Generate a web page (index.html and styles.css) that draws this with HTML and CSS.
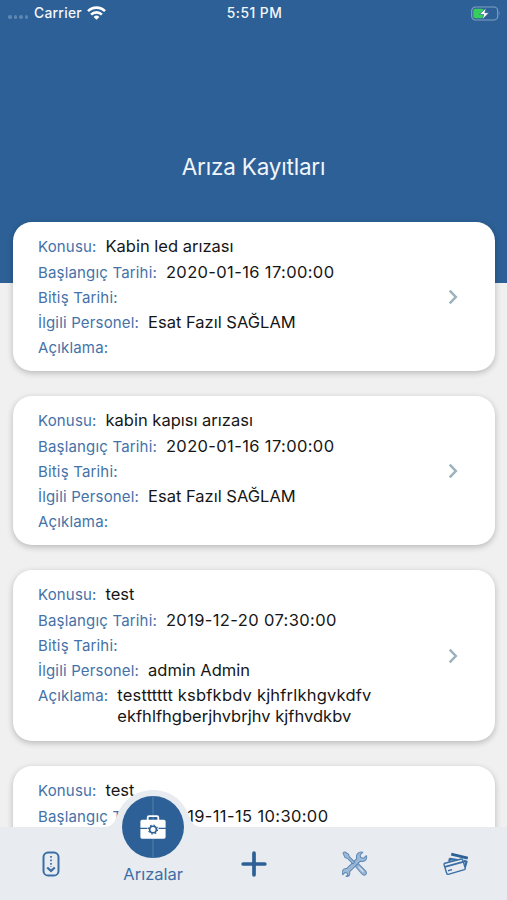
FILE: index.html
```html
<!DOCTYPE html>
<html lang="tr">
<head>
    <meta charset="UTF-8">
    <meta name="viewport" content="width=device-width, initial-scale=1.0">
    <title>Arıza Kayıtları</title>
    <link rel="stylesheet" href="styles.css">
</head>
<body>
    <div class="app">
        <!-- Durum çubuğu -->
        <div class="status-bar">
            <div class="status-left">
                <span class="signal"><i></i><i></i><i></i><i></i></span>
                <span class="carrier">Carrier</span>
                <svg class="wifi" width="19" height="14" viewBox="0 0 19 14" fill="none" stroke="#fff" stroke-width="2.6">
                    <path d="M1 5.2a12 12 0 0 1 17 0"/>
                    <path d="M4.1 8.6a7.6 7.6 0 0 1 10.8 0"/>
                    <path d="M9.5 13.8L6.6 10.9a4.1 4.1 0 0 1 5.8 0z" fill="#fff" stroke="none"/>
                </svg>
            </div>
            <span class="clock">5:51 PM</span>
            <svg class="battery" width="30" height="15" viewBox="0 0 30 15">
                <rect x="0.7" y="1" width="26" height="13" rx="3.8" fill="none" stroke="#7f9fc1" stroke-width="1.2"/>
                <path d="M28.3 5.3q1.6 2.2 0 4.4z" fill="#7f9fc1"/>
                <rect x="2.3" y="2.7" width="10.5" height="9.6" rx="2" fill="#37cf5c"/>
                <path d="M15.2 1.8L8.4 8.4h4.3l-1.3 5L18 6.7h-4.2z" fill="#fff" stroke="#2d6096" stroke-width="0.7"/>
            </svg>
        </div>

        <header class="header">
            <h1>Arıza Kayıtları</h1>
        </header>

        <!-- Arıza listesi -->
        <main class="list">
            <article class="card">
                <dl class="fields">
                    <div class="row"><dt>Konusu:</dt><dd>Kabin led arızası</dd></div>
                    <div class="row"><dt>Başlangıç Tarihi:</dt><dd class="date">2020-01-16 17:00:00</dd></div>
                    <div class="row empty"><dt>Bitiş Tarihi:</dt><dd></dd></div>
                    <div class="row person"><dt>İlgili Personel:</dt><dd>Esat Fazıl SAĞLAM</dd></div>
                    <div class="row"><dt>Açıklama:</dt><dd></dd></div>
                </dl>
                <svg class="chevron" width="10" height="16" viewBox="0 0 10 16"><path d="M1.7 1.7L7.8 8l-6.1 6.3"/></svg>
            </article>
            <article class="card">
                <dl class="fields">
                    <div class="row"><dt>Konusu:</dt><dd>kabin kapısı arızası</dd></div>
                    <div class="row"><dt>Başlangıç Tarihi:</dt><dd class="date">2020-01-16 17:00:00</dd></div>
                    <div class="row empty"><dt>Bitiş Tarihi:</dt><dd></dd></div>
                    <div class="row person"><dt>İlgili Personel:</dt><dd>Esat Fazıl SAĞLAM</dd></div>
                    <div class="row"><dt>Açıklama:</dt><dd></dd></div>
                </dl>
                <svg class="chevron" width="10" height="16" viewBox="0 0 10 16"><path d="M1.7 1.7L7.8 8l-6.1 6.3"/></svg>
            </article>
            <article class="card">
                <dl class="fields">
                    <div class="row"><dt>Konusu:</dt><dd>test</dd></div>
                    <div class="row"><dt>Başlangıç Tarihi:</dt><dd class="date">2019-12-20 07:30:00</dd></div>
                    <div class="row empty"><dt>Bitiş Tarihi:</dt><dd></dd></div>
                    <div class="row person"><dt>İlgili Personel:</dt><dd>admin Admin</dd></div>
                    <div class="row"><dt>Açıklama:</dt><dd class="note"><span class="note-first">testttttt ksbfkbdv kjhfrlkhgvkdfv</span><br>ekfhlfhgberjhvbrjhv kjfhvdkbv</dd></div>
                </dl>
                <svg class="chevron" width="10" height="16" viewBox="0 0 10 16"><path d="M1.7 1.7L7.8 8l-6.1 6.3"/></svg>
            </article>
            <article class="card">
                <dl class="fields">
                    <div class="row"><dt>Konusu:</dt><dd>test</dd></div>
                    <div class="row"><dt>Başlangıç Tarihi:</dt><dd class="date">2019-11-15 10:30:00</dd></div>
                </dl>
            </article>
        </main>

        <!-- Alt menü -->
        <nav class="tab-bar">
            <svg class="tab-bg" width="507" height="110" viewBox="0 0 507 110">
                <path d="M0 37H104C113 37 115 31 118 23C124 9 137 0 153 0S182 9 188 23C191 31 193 37 202 37H507V110H0z" fill="#e8ecf1"/>
            </svg>
            <a class="tab">
                <svg width="18" height="26" viewBox="0 0 18 26" fill="none" stroke="#3a6ea5" stroke-width="2">
                    <rect x="1.5" y="1.5" width="15" height="23" rx="4.6"/>
                    <path d="M9 5v11" stroke-width="1.7" stroke-dasharray="1.8 1.7"/>
                    <path d="M5.2 16.5L9 19.9l3.8-3.4" stroke-width="2.2"/>
                </svg>
            </a>
            <a class="tab active">
                <span class="bubble">
                    <svg width="62" height="62" viewBox="0 0 62 62">
                        <path d="M31 0v62" stroke="#5b88b6" stroke-width="0.8"/>
                        <path d="M25.7 24.5v-3.1q0-1.3 1.3-1.3h8q1.3 0 1.3 1.3v3.1" fill="none" stroke="#fff" stroke-width="1.8"/>
                        <path d="M20.2 23.8h21.6q1.8 0 1.8 1.8v6.1H18.4v-6.1q0-1.8 1.8-1.8zM18.4 33.1h25.2v8q0 1.6-1.6 1.6H20q-1.6 0-1.6-1.6z" fill="#fff"/>
                        <circle cx="31" cy="33.5" r="5.7" fill="#fff"/>
                        <circle cx="31" cy="33.5" r="3.3" fill="none" stroke="#2d6096" stroke-width="1.6"/>
                        <circle cx="31" cy="33.5" r="4.5" fill="none" stroke="#2d6096" stroke-width="1.2" stroke-dasharray="1.6 1.934"/>
                    </svg>
                </span>
                <span class="tab-label">Arızalar</span>
            </a>
            <a class="tab">
                <svg width="26" height="26" viewBox="0 0 26 26"><path d="M13 2.2v21.6M2.2 13h21.6" stroke="#2d6096" stroke-width="3.7" stroke-linecap="round"/></svg>
            </a>
            <a class="tab">
                <svg width="26" height="26" viewBox="0 0 28 28" fill="#9db9d5" stroke="#5d89b7" stroke-width="1.1" stroke-linejoin="round">
                    <path d="M8.3 22.3L19.8 11q4 1 6-1.7 1.2-2 .4-4.3l-3 2.8-3-.7-.7-2.9 2.9-2.8q-3.4-.9-5.6 1.5-1.9 2.3-.9 5.3L5 18.9q-3.5-.5-4.5 2.6-.6 2 .4 4l2.3-2.3 2.4.6.6 2.3-2 1.2q4.8.8 4.1-5z"/>
                    <path d="M1.3 2.8q-.4-2 2-1.7l3.5 2.2 1.3 3 5.7 5.6-2 2-5.6-5.7-3-1.3z"/>
                    <path d="M14.5 16.7l3-3 7.8 7.7q1.8 2.2.2 4-1.8 1.5-3.8-.4z"/>
                    <path d="M18.3 17.5l4.6 4.6" fill="none" stroke="#e8ecf1"/>
                </svg>
            </a>
            <a class="tab">
                <svg class="cards-icon" width="26" height="24" viewBox="0 0 26 24" fill="none" stroke="#3a6ea5" stroke-width="1.4" stroke-linejoin="round">
                    <path d="M8.2 2.1l16.6 4" stroke="#2d6096" stroke-width="3"/>
                    <path d="M6.2 9.6l.7-2.6 9.4 1.4M20.8 9l2.7.7-1.8 5.8-1 .6" stroke-width="2.4"/>
                    <path d="M1.1 12.7q-.3-1.1.8-1.4L18.3 7q1.1-.3 1.4.8l2.5 8.3q.3 1.1-.8 1.5L5.2 22.3q-1.1.3-1.4-.8z" fill="#e8ecf1"/>
                    <path d="M1.9 14.9l18.2-5" stroke-width="2"/>
                    <path d="M5 18.7l4.1-1.1"/>
                </svg>
            </a>
        </nav>
    </div>
</body>
</html>
```
FILE: styles.css
```css
* {
    box-sizing: border-box;
}
body {
    font-family: Inter, "Liberation Sans", sans-serif;
    background-color: #f0f0f0;
    margin: 0;
    padding: 0;
}
.app {
    position: relative;
    width: 507px;
    height: 900px;
    overflow: hidden;
    background: linear-gradient(#2d6096 283px, #f0f0f0 283px);
}
.status-bar {
    display: grid;
    grid-template-columns: 1fr auto 1fr;
    align-items: center;
    height: 26px;
    padding: 0 6px 0 8px;
    color: #f4f7fa;
    font-size: 13.8px;
    font-weight: 500;
    letter-spacing: 0.3px;
}
.status-left {
    display: flex;
    align-items: center;
}
.signal {
    display: flex;
    gap: 2px;
    width: 26px;
    padding-top: 8px;
}
.signal i {
    width: 3.5px;
    height: 3.5px;
    border-radius: 50%;
    background: #5d86b1;
}
.wifi {
    margin-left: 5px;
}
.clock {
    letter-spacing: 0.5px;
}
.battery {
    justify-self: end;
}
.header {
    height: 196px;
    padding-top: 126px;
}
h1 {
    margin: 0;
    color: #f1f5f9;
    font-size: 22.5px;
    font-weight: 400;
    letter-spacing: -0.2px;
    line-height: 30px;
    text-align: center;
}
.list {
    display: flex;
    flex-direction: column;
    gap: 25px;
    padding: 0 12px 0 13px;
}
.card {
    display: flex;
    align-items: center;
    justify-content: space-between;
    min-height: 149px;
    padding: 12px 37px 10px 25px;
    background: #fff;
    border-radius: 19px;
    box-shadow: 0 2px 6px rgba(0, 0, 0, 0.24);
}
.fields {
    align-self: flex-start;
    margin: 0;
}
.row {
    display: flex;
    align-items: flex-start;
    gap: 9px;
    height: 25.5px;
}
.row.empty {
    height: 24.5px;
}
.row.person {
    height: 25px;
}
.row:last-child {
    height: auto;
    min-height: 25.5px;
}
dt {
    color: #4572a8;
    font-size: 15px;
    letter-spacing: 0.17px;
    line-height: 25.5px;
}
dd {
    margin: 0;
    padding-top: 2px;
    color: #161616;
    font-size: 16.5px;
    line-height: 21.5px;
}
.date {
    letter-spacing: 0.37px;
}
.note {
    padding-bottom: 3.5px;
    letter-spacing: 0.02px;
}
.note-first {
    letter-spacing: 0.2px;
}
.chevron {
    margin-bottom: 2px;
}
.chevron path {
    fill: none;
    stroke: #9db2bd;
    stroke-width: 2.5;
}
.tab-bar {
    position: absolute;
    left: 0;
    bottom: 0;
    display: flex;
    width: 507px;
    height: 73px;
}
.tab-bg {
    position: absolute;
    left: 0;
    bottom: 0;
}
.tab {
    position: relative;
    display: flex;
    flex: 1;
    align-items: center;
    justify-content: center;
}
.tab.active {
    flex-direction: column;
    justify-content: flex-start;
    margin-top: -31px;
    padding-left: 1.6px;
}
.bubble {
    width: 62px;
    height: 62px;
    border-radius: 50%;
    background: #2d6096;
    overflow: hidden;
}
.tab-label {
    margin-top: 5px;
    color: #3d6ea5;
    font-size: 16.5px;
    line-height: 22px;
}
```
